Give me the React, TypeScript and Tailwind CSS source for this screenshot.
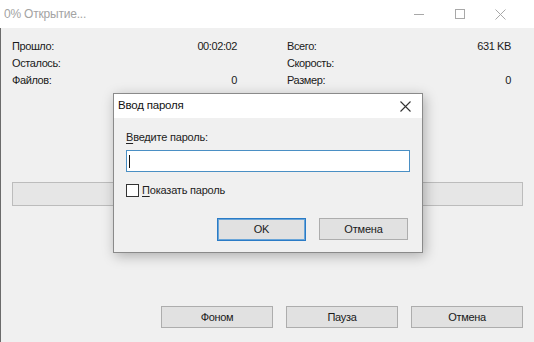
export default function App() {
  return (
    <div className="relative w-[534px] h-[342px] overflow-hidden bg-[#f0f0f0] flex flex-col font-['Liberation_Sans',Arial,sans-serif] text-[11px] text-[#1a1a1a]">
      {/* title bar */}
      <div className="h-[28px] bg-white flex items-center pl-[4px] pr-[13px] shrink-0">
        <span className="text-[12px] text-[#a3a3a3] flex-1 tracking-[-0.2px]">0% Открытие...</span>
        <div className="flex items-center h-full">
          <div className="w-[41px] h-full flex items-center justify-center">
            <svg width="10" height="10" viewBox="0 0 10 10">
              <path d="M0 5.5h10" stroke="#a8a8a8" strokeWidth="1" />
            </svg>
          </div>
          <div className="w-[41px] h-full flex items-center justify-center">
            <svg width="10" height="10" viewBox="0 0 10 10">
              <rect x="0.5" y="0.5" width="9" height="9" fill="none" stroke="#a8a8a8" strokeWidth="1" />
            </svg>
          </div>
          <div className="w-[41px] h-full flex items-center justify-center">
            <svg width="11" height="11" viewBox="0 0 11 11">
              <path d="M0.5 0.5l10 10M10.5 0.5l-10 10" stroke="#a8a8a8" strokeWidth="1" />
            </svg>
          </div>
        </div>
      </div>

      {/* body */}
      <div className="flex-1 flex flex-col border-l border-[#6b6b6b] pl-[11px] pr-[11px] pt-[10px]">
        <div className="grid grid-cols-[225px_224px] gap-x-[50px] leading-[17px] tracking-[-0.4px]">
          <div className="flex justify-between"><span>Прошло:</span><span>00:02:02</span></div>
          <div className="flex justify-between"><span>Всего:</span><span>631 KB</span></div>
          <div className="flex justify-between"><span>Осталось:</span><span></span></div>
          <div className="flex justify-between"><span>Скорость:</span><span></span></div>
          <div className="flex justify-between"><span>Файлов:</span><span>0</span></div>
          <div className="flex justify-between"><span>Размер:</span><span>0</span></div>
        </div>

        <div className="mt-[93px] h-[24px] bg-[#e6e6e6] border border-[#bcbcbc]" />

        <div className="mt-[100px] flex justify-end gap-[13px] tracking-[-0.3px]">
          <button className="w-[112px] h-[22px] bg-[#e1e1e1] border border-[#adadad]">Фоном</button>
          <button className="w-[112px] h-[22px] bg-[#e1e1e1] border border-[#adadad]">Пауза</button>
          <button className="w-[112px] h-[22px] bg-[#e1e1e1] border border-[#adadad]">Отмена</button>
        </div>
      </div>

      {/* password dialog */}
      <div className="absolute left-[113px] top-[93px] w-[310px] h-[160px] bg-[#f0f0f0] border border-[#8a8a8a] shadow-[2px_3px_12px_rgba(0,0,0,0.28)] flex flex-col text-[11px] tracking-[-0.2px]">
        <div className="h-[24px] bg-white flex items-center pl-[4px] shrink-0">
          <span className="flex-1 text-[#111] text-[11.5px]">Ввод пароля</span>
          <div className="w-[34px] h-full flex items-center justify-center">
            <svg width="11" height="11" viewBox="0 0 11 11">
              <path d="M0.5 0.5l10 10M10.5 0.5l-10 10" stroke="#333" strokeWidth="1.1" />
            </svg>
          </div>
        </div>

        <div className="flex flex-col pl-[12px] pr-[13px] pt-[13px]">
          <div className="leading-[12px] text-[#222]">
            <span className="underline underline-offset-2">В</span>ведите пароль:
          </div>
          <div className="mt-[7px] h-[22px] w-[284px] bg-white border border-[#4a8fc4] flex items-center pl-[2px]">
            <div className="w-px h-[13px] bg-[#111]" />
          </div>
          <div className="mt-[12px] flex items-center h-[13px]">
            <div className="w-[13px] h-[13px] bg-white border border-[#333]" />
            <span className="ml-[3px] text-[#222]">
              <span className="underline underline-offset-2">П</span>оказать пароль
            </span>
          </div>
          <div className="mt-[21px] flex justify-end gap-[13px] pr-[1px]">
            <button className="w-[89px] h-[23px] bg-[#e1e1e1] border border-[#2a7bc6] shadow-[inset_0_0_0_1px_#6aa5d8]">OK</button>
            <button className="w-[89px] h-[22px] bg-[#e1e1e1] border border-[#adadad]">Отмена</button>
          </div>
        </div>
      </div>
    </div>
  );
}
